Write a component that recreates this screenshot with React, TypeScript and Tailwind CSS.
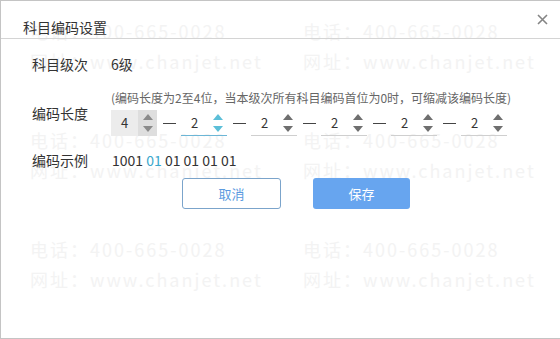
import React from "react"

const cjk = { fontFamily: '"Microsoft YaHei", "Noto Sans CJK SC", "Noto Sans", sans-serif' }

const lengths = [4, 2, 2, 2, 2, 2]

function Spinner({ tone }: { tone: "disabled" | "active" | "normal" }) {
  const color = tone === "active" ? "#5cbfd8" : tone === "disabled" ? "#8a8a8a" : "#6f6f6f"
  return (
    <div
      className={`flex flex-col items-center justify-center gap-[6px] w-[19px] h-full ${
        tone === "disabled" ? "bg-[#dedede]" : ""
      }`}
    >
      <svg width="10" height="6" viewBox="0 0 10 6">
        <path d="M0 6 L5 0 L10 6 Z" fill={color} />
      </svg>
      <svg width="10" height="6" viewBox="0 0 10 6">
        <path d="M0 0 L10 0 L5 6 Z" fill={color} />
      </svg>
    </div>
  )
}

function LengthInput({ value, index }: { value: number; index: number }) {
  const disabled = index === 0
  const active = index === 1
  return (
    <div
      className={`flex items-stretch w-[46px] h-[26px] ${
        disabled
          ? "bg-[#ececec]"
          : active
          ? "border-b border-[#6cb6d6]"
          : "border-b border-[#cfcfcf]"
      }`}
    >
      <div className="flex-1 flex items-center justify-center text-[13px] text-[#333]">{value}</div>
      <Spinner tone={disabled ? "disabled" : active ? "active" : "normal"} />
    </div>
  )
}

function Watermark() {
  const block = (
    <div
      className="flex flex-col whitespace-nowrap text-[18px] leading-[30px] tracking-[2px] text-[#f3f3f3]"
      style={cjk}
    >
      <span>电话：400-665-0028</span>
      <span>网址：www.chanjet.net</span>
    </div>
  )
  return (
    <div className="absolute inset-0 pointer-events-none select-none">
      <div className="flex gap-[70px] pl-[29px] pt-[15px]">
        {[0, 1].map((c) => (
          <div key={c} className="flex flex-col gap-[49px] w-[203px]">
            {block}
            {block}
            {block}
          </div>
        ))}
      </div>
    </div>
  )
}

export default function App() {
  return (
    <div
      className="relative w-[560px] h-[339px] bg-white border-l border-t border-b border-[#c4c4c4] overflow-hidden text-[#333]"
      style={cjk}
    >
      <Watermark />
      <div className="relative">
        <div className="flex justify-between h-[38px] border-b border-[#d4d4d4]">
          <div className="pl-[22px] pt-[16px] text-[14px] leading-5">科目编码设置</div>
          <svg className="mt-[13px] mr-[12px]" width="11" height="11" viewBox="0 0 11 11">
            <path d="M1 1 L10 10 M10 1 L1 10" stroke="#858585" strokeWidth="1.6" />
          </svg>
        </div>

        <div className="pl-[31px]">
          <div className="flex mt-[15px] text-[14px] leading-5">
            <div className="w-[79px]">科目级次</div>
            <div>6级</div>
          </div>

          <div className="flex items-center mt-[16px]">
            <div className="w-[79px] text-[14px] leading-5">编码长度</div>
            <div className="flex flex-col">
              <div className="text-[12px] leading-4 text-[#666] mb-[4px]">
                (编码长度为2至4位，当本级次所有科目编码首位为0时，可缩减该编码长度)
              </div>
              <div className="flex items-center">
                {lengths.map((v, i) => (
                  <React.Fragment key={i}>
                    {i > 0 && (
                      <div className="flex justify-center w-[24px]">
                        <div className="w-[13px] h-px bg-[#444]" />
                      </div>
                    )}
                    <LengthInput value={v} index={i} />
                  </React.Fragment>
                ))}
              </div>
            </div>
          </div>

          <div className="flex mt-[14px] text-[14px] leading-5">
            <div className="w-[80px]">编码示例</div>
            <div>
              1001 <span className="text-[#3aa7cc]">01</span> 01 01 01 01
            </div>
          </div>

          <div className="flex gap-[32px] mt-[8px] ml-[150px]">
            <button className="w-[99px] h-[31px] rounded-[3px] border border-[#7ba4cb] bg-white text-[13px] text-[#5b9be0]">
              取消
            </button>
            <button className="w-[97px] h-[31px] rounded-[3px] bg-[#67a5ef] text-[13px] text-white">
              保存
            </button>
          </div>
        </div>
      </div>
    </div>
  )
}
